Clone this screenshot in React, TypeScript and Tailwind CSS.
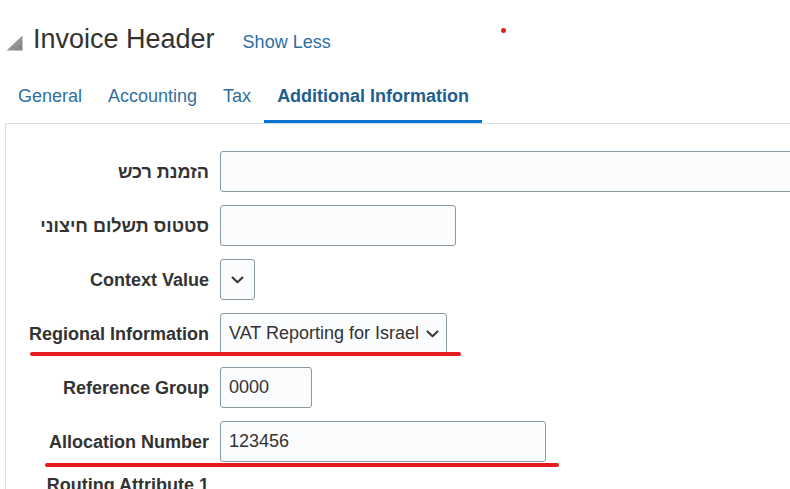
import React from "react";

function Chevron() {
  return (
    <svg width="13" height="8" viewBox="0 0 13 8" className="shrink-0">
      <path d="M1.5 1.5 L6.5 6.2 L11.5 1.5" fill="none" stroke="#333333" strokeWidth="2" strokeLinecap="round" strokeLinejoin="round" />
    </svg>
  );
}

function Row({
  label,
  children,
  underline,
}: {
  label: string;
  children: React.ReactNode;
  underline?: React.ReactNode;
}) {
  return (
    <div className="relative flex items-center h-[41px] mb-[13px]">
      <div className="w-[203px] shrink-0 text-right font-bold text-[18px] leading-[21px] text-[#333333] whitespace-nowrap pt-[1px]">
        {label}
      </div>
      <div className="ml-[11px] flex shrink-0">{children}</div>
      {underline}
    </div>
  );
}

const boxCls =
  "h-[41px] border border-[#8a9aa3] rounded-[3px] bg-[#fbfcfe] flex items-center text-[18px] text-[#333333] shrink-0";

export default function App() {
  return (
    <div className="relative w-[790px] h-[489px] overflow-hidden bg-white font-['Liberation_Sans',Arial,sans-serif]">
      <div className="absolute left-[501px] top-[28px] w-[5px] h-[5px] rounded-full bg-[#e01f1f]" />

      {/* Header */}
      <div className="flex items-baseline pt-[24px] pl-[6px]">
        <svg width="17" height="16" viewBox="0 0 17 16" className="mr-[10px] self-center mt-[6px]">
          <defs>
            <linearGradient id="tri" x1="0" y1="0" x2="1" y2="1">
              <stop offset="0" stopColor="#b5b5b5" />
              <stop offset="1" stopColor="#7d7d7d" />
            </linearGradient>
          </defs>
          <polygon points="16.5,0.5 16.5,15.5 0.5,15.5" fill="url(#tri)" />
        </svg>
        <span className="text-[27px] leading-[31px] text-[#333333]">Invoice Header</span>
        <span className="ml-[28px] text-[18px] leading-[21px] text-[#2c6fa6]">Show Less</span>
      </div>

      {/* Tabs */}
      <div className="flex pl-[5px] mt-[31px]">
        {["General", "Accounting", "Tax"].map((t) => (
          <div
            key={t}
            className="px-[13px] pb-[13px] text-[18px] leading-[21px] text-[#2f6f9f] border-b-[3px] border-transparent"
          >
            {t}
          </div>
        ))}
        <div className="px-[13px] pb-[13px] text-[18px] leading-[21px] font-bold text-[#1e5e8e] border-b-[3px] border-[#0572ce]">
          Additional Information
        </div>
      </div>

      {/* Panel */}
      <div className="ml-[5px] border-t border-l border-[#d6dfe6] pt-[27px] h-[400px]">
        <Row label="הזמנת רכש">
          <div className={boxCls + " w-[600px]"} />
        </Row>
        <Row label="סטטוס תשלום חיצוני">
          <div className={boxCls + " w-[236px]"} />
        </Row>
        <Row label="Context Value">
          <div className={boxCls + " w-[35px] justify-center"}>
            <Chevron />
          </div>
        </Row>
        <Row
          label="Regional Information"
          underline={
            <div className="absolute left-[24px] top-[39px] w-[431px] h-[4px] rounded-full bg-[#e51c1f]" />
          }
        >
          <div className={boxCls + " w-[227px] pl-[8px] pr-[7px] justify-between"}>
            <span className="whitespace-nowrap">VAT Reporting for Israel</span>
            <Chevron />
          </div>
        </Row>
        <Row label="Reference Group">
          <div className={boxCls + " w-[92px] pl-[8px]"}>0000</div>
        </Row>
        <Row
          label="Allocation Number"
          underline={
            <div className="absolute left-[39px] top-[42px] w-[514px] h-[4px] rounded-full bg-[#e51c1f]" />
          }
        >
          <div className={boxCls + " w-[326px] pl-[8px]"}>123456</div>
        </Row>
        <div className="flex items-start">
          <div className="w-[203px] shrink-0 text-right font-bold text-[18px] leading-[21px] text-[#333333] whitespace-nowrap">
            Routing Attribute 1
          </div>
        </div>
      </div>
    </div>
  );
}
